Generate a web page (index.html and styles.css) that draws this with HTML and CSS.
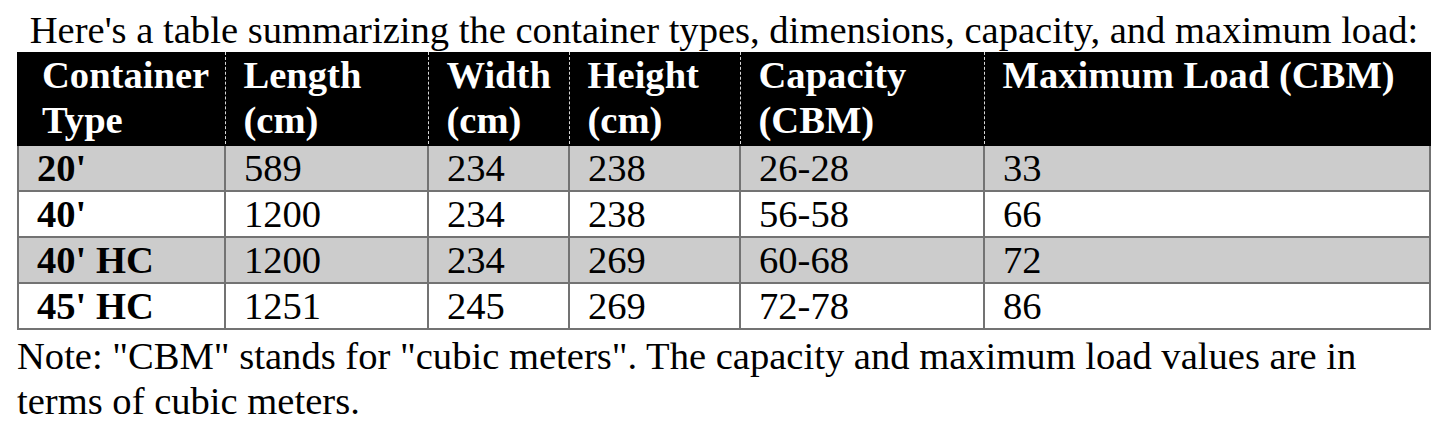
FILE: index.html
```html
<!DOCTYPE html>
<html lang="en">
<head>
<meta charset="utf-8">
<title>Container types</title>
<link rel="stylesheet" href="styles.css">
</head>
<body>
<div class="doc">
  <table class="ctable">
    <caption>Here's a table summarizing the container types, dimensions, capacity, and maximum load:</caption>
    <colgroup>
      <col class="c1"><col class="c2"><col class="c3"><col class="c4"><col class="c5"><col class="c6">
    </colgroup>
    <thead>
      <tr>
        <th>Container Type</th>
        <th>Length (cm)</th>
        <th>Width (cm)</th>
        <th>Height (cm)</th>
        <th>Capacity (CBM)</th>
        <th>Maximum Load (CBM)</th>
      </tr>
    </thead>
    <tbody>
      <tr class="alt"><td class="type">20'</td><td>589</td><td>234</td><td>238</td><td>26-28</td><td>33</td></tr>
      <tr><td class="type">40'</td><td>1200</td><td>234</td><td>238</td><td>56-58</td><td>66</td></tr>
      <tr class="alt"><td class="type">40' HC</td><td>1200</td><td>234</td><td>269</td><td>60-68</td><td>72</td></tr>
      <tr><td class="type">45' HC</td><td>1251</td><td>245</td><td>269</td><td>72-78</td><td>86</td></tr>
    </tbody>
  </table>
  <p class="note">Note: "CBM" stands for "cubic meters". The capacity and maximum load values are in terms of cubic meters.</p>
</div>
</body>
</html>
```
FILE: styles.css
```css
html, body {
  margin: 0;
  padding: 0;
  background: #fff;
}
body {
  font-family: "Liberation Serif", "Times New Roman", serif;
  font-size: 38.6px;
  color: #000;
}
.doc {
  width: 1412px;
  padding: 9px 0 0 17px;
}
.ctable {
  width: 1412px;
  table-layout: fixed;
  border-collapse: collapse;
}
.ctable caption {
  line-height: 42px;
  text-align: center;
  padding: 0 0 1px;
}
.c1 { width: 207px; }
.c2 { width: 203px; }
.c3 { width: 141px; }
.c4 { width: 171px; }
.c5 { width: 244px; }
.c6 { width: 446px; }
.ctable th {
  background: #000;
  color: #fff;
  font-weight: bold;
  text-align: left;
  vertical-align: top;
  line-height: 45px;
  padding: 1px 18px 1px 18px;
  border: 0;
  border-bottom: 2px solid #000;
}
.ctable th:first-child {
  padding-left: 23px;
  border-left: 2px solid #000;
}
.ctable th:last-child {
  border-right: 2px solid #000;
}
.ctable th + th {
  border-left: 1px dashed #d8d8d8;
}
.ctable td {
  line-height: 43px;
  padding: 1px 18px 0 18px;
  border: 2px solid #737373;
  text-align: left;
  vertical-align: top;
}
.ctable tr.alt td {
  background: #cccccc;
}
.ctable td.type {
  font-weight: bold;
}
.note {
  margin: 4px 0 0;
  line-height: 45px;
}
```
